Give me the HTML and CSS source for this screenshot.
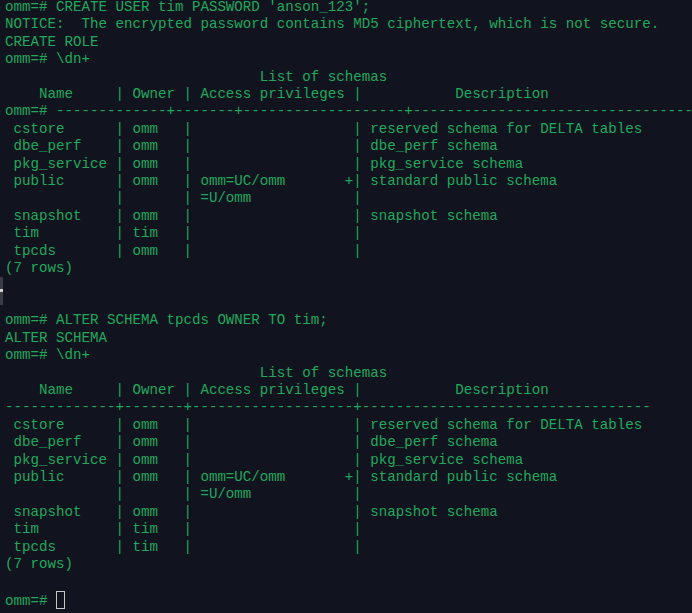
FILE: index.html
```html
<!DOCTYPE html>
<html>
<head>
<meta charset="utf-8">
<link rel="stylesheet" href="styles.css">
</head>
<body>
<div class="term">
<pre class="out">omm=# CREATE USER tim PASSWORD 'anson_123';
NOTICE:  The encrypted password contains MD5 ciphertext, which is not secure.
CREATE ROLE
omm=# \dn+
                              List of schemas
    Name     | Owner | Access privileges |           Description
<span class="clip">omm=# -------------+-------+-------------------+----------------------------------</span>
 cstore      | omm   |                   | reserved schema for DELTA tables
 dbe_perf    | omm   |                   | dbe_perf schema
 pkg_service | omm   |                   | pkg_service schema
 public      | omm   | omm=UC/omm       +| standard public schema
             |       | =U/omm            |
 snapshot    | omm   |                   | snapshot schema
 tim         | tim   |                   |
 tpcds       | omm   |                   |
(7 rows)


omm=# ALTER SCHEMA tpcds OWNER TO tim;
ALTER SCHEMA
omm=# \dn+
                              List of schemas
    Name     | Owner | Access privileges |           Description
-------------+-------+-------------------+----------------------------------
 cstore      | omm   |                   | reserved schema for DELTA tables
 dbe_perf    | omm   |                   | dbe_perf schema
 pkg_service | omm   |                   | pkg_service schema
 public      | omm   | omm=UC/omm       +| standard public schema
             |       | =U/omm            |
 snapshot    | omm   |                   | snapshot schema
 tim         | tim   |                   |
 tpcds       | tim   |                   |
(7 rows)

omm=# <span class="cursor"></span></pre>
<div class="scroll-mark"><span class="dot"></span></div>
</div>
</body>
</html>
```
FILE: styles.css
```css
html, body {
  margin: 0;
  padding: 0;
  background: #11131e;
  overflow: hidden;
}
.term {
  position: relative;
  width: 692px;
  height: 613px;
  overflow: hidden;
  background: #11131e;
}
.out {
  margin: 0;
  padding: 0 0 0 5px;
  font-family: "Liberation Mono", "Courier New", monospace;
  font-size: 14.17px;
  line-height: 17.4px;
  color: #20a95d;
  white-space: pre;
  position: relative;
  top: -1px;
}
.clip {
  display: inline-block;
  width: 687px;
  overflow: hidden;
  vertical-align: top;
}
.cursor {
  display: inline-block;
  width: 7px;
  height: 16px;
  border: 1px solid #c8c8c8;
  vertical-align: -4px;
}
.scroll-mark {
  position: absolute;
  left: 0;
  top: 277px;
  width: 3px;
  height: 28px;
  background: #3a3c44;
}
.dot {
  position: absolute;
  left: 0;
  top: 12px;
  width: 3px;
  height: 3px;
  background: #d0d0d0;
}
```
